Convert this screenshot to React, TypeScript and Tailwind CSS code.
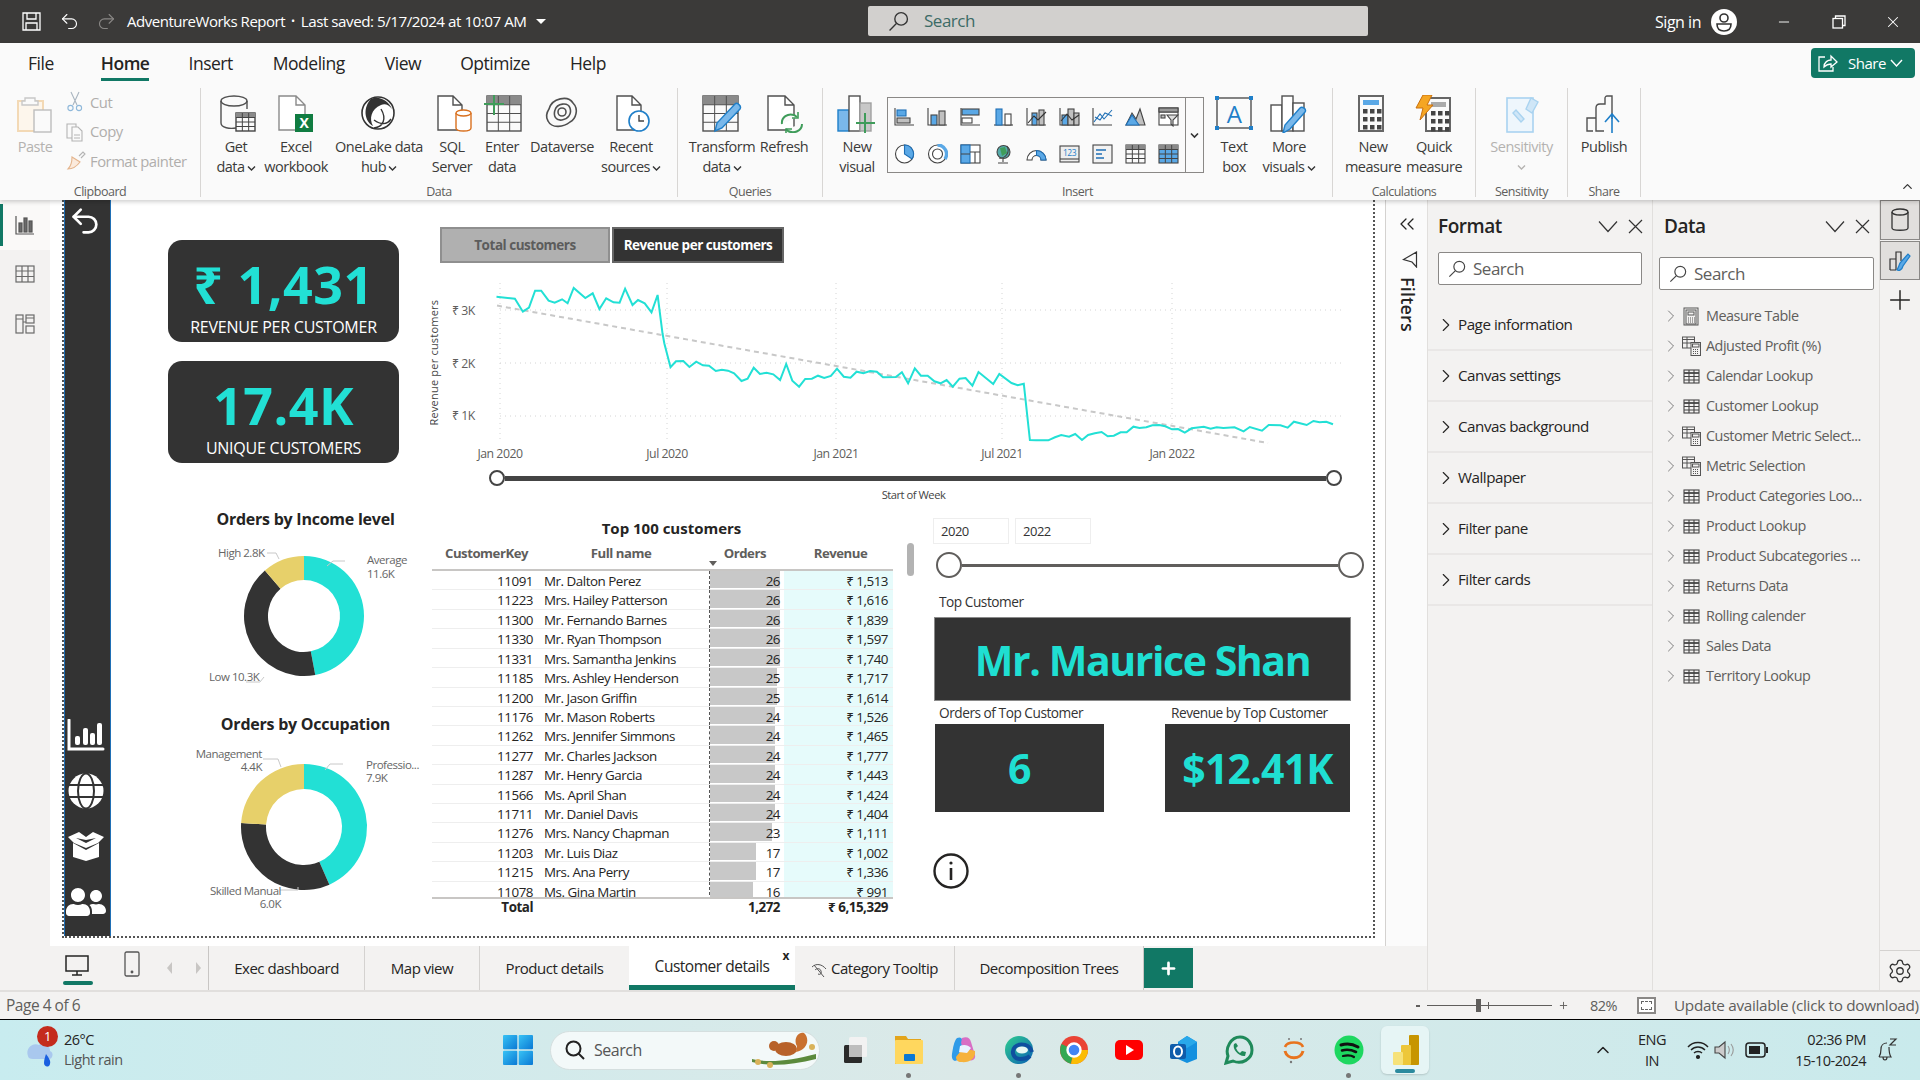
import React from "react";
import { Undo2, Redo2, ChevronRight, X, Plus, Minus, ChevronUp, ChevronsLeft, Settings } from "lucide-react";
import { FaUserFriends } from "react-icons/fa";

const TEAL = "#22e0d5";
const S = "#505050";

const Mag = ({ size = 20, color = "#444" }: { size?: number; color?: string }) => (
  <svg width={size} height={size} viewBox="0 0 20 20" fill="none" stroke={color} strokeWidth="1.3">
    <circle cx="12.5" cy="7.5" r="6" />
    <path d="M8 12 L1.5 18.5" />
  </svg>
);

const Ic = ({ w = 40, h = 38, children }: { w?: number; h?: number; children: React.ReactNode }) => (
  <svg width={w} height={h} viewBox={`0 0 ${w} ${h}`} fill="none" stroke={S} strokeWidth="1.4" className="block shrink-0">
    {children}
  </svg>
);

const Grid = ({ x, y, w, h, head = true, cols = 3, rows = 3, fill = "none" }: { x: number; y: number; w: number; h: number; head?: boolean; cols?: number; rows?: number; fill?: string }) => {
  const ls = [];
  for (let i = 1; i < cols; i++) ls.push(<path key={"c" + i} d={`M${x + (w * i) / cols} ${y} V${y + h}`} strokeWidth="1" />);
  for (let i = 1; i < rows; i++) ls.push(<path key={"r" + i} d={`M${x} ${y + (h * i) / rows} H${x + w}`} strokeWidth="1" />);
  return (
    <g>
      <rect x={x} y={y} width={w} height={h} fill={fill} />
      {head && <rect x={x} y={y} width={w} height={h / rows} fill="#8a8a8a" stroke="none" />}
      {ls}
    </g>
  );
};

const Doc = ({ x = 0, y = 0, w = 24, h = 34 }: { x?: number; y?: number; w?: number; h?: number }) => (
  <path d={`M${x + w - 9} ${y} H${x} V${y + h} H${x + w} V${y + 9} Z M${x + w - 9} ${y} V${y + 9} H${x + w}`} fill="#fff" />
);

const IGet = () => (
  <Ic>
    <path d="M5 6 V28 C5 33 14 34 20 33 M31 6 V14" />
    <ellipse cx="18" cy="6" rx="13" ry="5" />
    <g stroke="#444"><Grid x={20} y={18} w={19} h={18} cols={3} rows={4} fill="#fafafa" /></g>
  </Ic>
);
const IExcel = () => (
  <Ic>
    <g stroke="#8a8a8a"><Doc x={3} y={1} w={26} h={34} /></g>
    <rect x="19" y="19" width="18" height="18" fill="#107c41" stroke="none" />
    <text x="28" y="33" fontSize="14" fontWeight="700" fill="#fff" stroke="none" textAnchor="middle">X</text>
  </Ic>
);
const IOneLake = () => (
  <Ic>
    <circle cx="19" cy="18" r="16" fill="#fff" stroke="#333" strokeWidth="1.6" />
    <path d="M12 4 C4 12 5 26 14 31 C10 24 12 14 22 10 C26 8 30 10 33 14 C30 6 20 0 12 4Z" fill="#333" stroke="none" />
    <path d="M15 33 C24 32 28 24 22 14 M32 24 C28 30 22 30 15 25" stroke="#333" />
  </Ic>
);
const ISql = () => (
  <Ic>
    <Doc x={6} y={1} w={24} h={34} />
    <path d="M24 18 V33 C24 37 39 37 39 33 V18" fill="#fff" stroke="#d9701e" />
    <ellipse cx="31.5" cy="18" rx="7.5" ry="3" fill="#fff" stroke="#d9701e" />
  </Ic>
);
const IEnter = () => (
  <Ic>
    <g transform="translate(1,-1)"><Grid x={4} y={2} w={34} h={35} cols={3} rows={4} /></g>
    <path d="M12 0 V20 M2 9 H22" stroke="#3f9c5a" strokeWidth="2" />
  </Ic>
);
const IDataverse = () => (
  <Ic>
    <path d="M7 14 C10 3 26 0 31 8 C37 14 34 24 28 27 C22 32 10 34 6 26 C3 21 5 17 7 14Z" strokeWidth="1.6" />
    <path d="M13 15 C15 8 26 7 28 13 C30 19 26 24 20 25 C14 26 11 21 13 15Z" strokeWidth="1.6" />
    <circle cx="20" cy="17" r="4" strokeWidth="1.6" />
  </Ic>
);
const IRecent = () => (
  <Ic>
    <Doc x={6} y={1} w={24} h={34} />
    <circle cx="28" cy="26" r="10" fill="#fff" stroke="#1f7fc9" strokeWidth="1.6" />
    <path d="M28 20 V26 H33" stroke="#444" />
  </Ic>
);
const ITransform = () => (
  <Ic>
    <Grid x={1} y={1} w={35} h={35} cols={3} rows={4} />
    <path d="M13 36 L15 28 L33 9 C35 7 40 11 38 14 L20 33 Z" fill="#7ab8ea" stroke="#1f7fc9" />
  </Ic>
);
const IRefresh = () => (
  <Ic>
    <Doc x={4} y={1} w={26} h={34} />
    <path d="M18 29 C17 22 24 18 30 20 L33 22 M38 29 C38 36 30 39 24 36 L22 34" stroke="#3f9c5a" strokeWidth="2" fill="#fafafa" />
    <path d="M34 17 V23 H28 M22 40 V34 H28" stroke="#3f9c5a" strokeWidth="1.6" />
  </Ic>
);
const INewVis = () => (
  <Ic>
    <rect x="1" y="15" width="11" height="21" fill="#7ab8ea" stroke="#1f7fc9" />
    <rect x="12" y="1" width="11" height="35" fill="#fff" />
    <rect x="23" y="8" width="11" height="28" fill="#c8c8c8" stroke="#a0a0a0" />
    <path d="M28 18 V38 M19 28 H38" stroke="#3f9c5a" strokeWidth="2" />
  </Ic>
);
const ITextBox = () => (
  <Ic>
    <rect x="3" y="3" width="34" height="30" />
    <text x="20" y="28" fontSize="24" fill="#1f7fc9" stroke="none" textAnchor="middle">A</text>
    {[[3, 3], [37, 3], [3, 33], [37, 33]].map(([x, y], i) => (
      <rect key={i} x={x - 2} y={y - 2} width="4" height="4" fill="#1f7fc9" stroke="none" />
    ))}
  </Ic>
);
const IMore = () => (
  <Ic>
    <rect x="2" y="10" width="11" height="26" fill="#fff" />
    <rect x="13" y="1" width="11" height="35" fill="#fff" />
    <rect x="24" y="8" width="11" height="28" fill="#fff" />
    <path d="M14 38 L16 30 L31 13 C33 11 38 14 36 17 L21 34 Z" fill="#7ab8ea" stroke="#1f7fc9" />
  </Ic>
);
const Keys = ({ x, y }: { x: number; y: number }) => (
  <g fill="#444" stroke="none">
    {[0, 8, 16].map((dy) => [0, 7, 14].map((dx) => <rect key={`${dx}-${dy}`} x={x + dx} y={y + dy} width="4.5" height="4.5" />))}
  </g>
);
const IMeasure = () => (
  <Ic>
    <rect x="6" y="1" width="24" height="35" strokeWidth="2" stroke="#666" />
    <rect x="10" y="5" width="16" height="5" fill="#5aa8e6" stroke="none" />
    <Keys x={10} y={14} />
  </Ic>
);
const IQuick = () => (
  <Ic>
    <rect x="12" y="3" width="24" height="33" strokeWidth="2" stroke="#666" />
    <rect x="17" y="7" width="15" height="5" fill="#aaa" stroke="none" />
    <Keys x={17} y={16} />
    <path d="M9 0 H18 L13 10 H19 L6 25 L9 13 H2 Z" fill="#f5a623" stroke="#c96f0e" strokeWidth="1" />
  </Ic>
);
const ISens = () => (
  <Ic>
    <rect x="5" y="3" width="26" height="34" stroke="#a9d3f0" strokeWidth="1.6" fill="#eef6fc" />
    <path d="M11 18 L19 27 L22 24 L14 15Z M24 14 L29 3 L36 7 L30 18Z" stroke="#a9d3f0" fill="#cfe6f7" />
  </Ic>
);
const IPublish = () => (
  <Ic>
    <path d="M9 36 H3 V23 H12 V36 H20 M12 23 V13 C12 10 14 9 16 9 H21 V3 C21 2 22 1 23 1 H28 V24" />
    <path d="M28 38 V20 M21 27 L28 19 L35 27" stroke="#1f7fc9" strokeWidth="1.6" />
  </Ic>
);

const gal = (n: number) => {
  const A = <path d="M1 1 V18 H20" stroke="#444" />;
  const B = "#5aa8e6";
  const G = "#c0c0c0";
  switch (n) {
    case 0: return <>{A}<rect x="3" y="3" width="9" height="6" fill={B} stroke="#1f6fb5" /><rect x="3" y="11" width="13" height="5" fill={G} /></>;
    case 1: return <>{A}<rect x="4" y="8" width="6" height="10" fill={B} /><rect x="12" y="4" width="6" height="14" fill={G} /></>;
    case 2: return <>{A}<rect x="2" y="2" width="17" height="6" fill={B} /><rect x="2" y="11" width="10" height="5" fill="#fff" /></>;
    case 3: return <><path d="M1 18 H20" stroke="#444" /><rect x="3" y="2" width="6" height="16" fill={B} stroke="#1f6fb5" /><rect x="12" y="7" width="6" height="11" fill="#fff" /></>;
    case 4: return <>{A}<rect x="6" y="6" width="5" height="12" fill={B} /><rect x="13" y="3" width="5" height="15" fill={G} /><path d="M2 16 L8 9 L12 13 L20 5" stroke="#333" /></>;
    case 5: return <>{A}<rect x="3" y="8" width="6" height="10" fill={B} /><rect x="9" y="2" width="6" height="16" fill={G} /><rect x="15" y="6" width="5" height="12" fill={G} /><path d="M2 14 L8 7 L13 13 L20 8" stroke="#333" /></>;
    case 6: return <>{A}<path d="M2 15 L8 7 L12 12 L20 3 M3 10 L8 13 L13 6 L20 9" stroke="#1f6fb5" /></>;
    case 7: return <><path d="M1 18 L7 6 L11 12 L15 2 L20 18 Z" fill={G} /><path d="M1 18 L7 8 L14 18Z" fill={B} stroke="#1f6fb5" /></>;
    case 8: return <><rect x="1" y="1" width="19" height="17" fill="#fff" /><path d="M1 5 H20" /><rect x="1" y="1" width="19" height="4" fill="#999" /><path d="M9 8 H20 L15 13 V19 L13 17 V13Z" fill="#ddd" /><rect x="3" y="8" width="4" height="3" fill={G} /></>;
    case 9: return <><circle cx="10.5" cy="10" r="9" fill="#fff" /><path d="M10.5 1 A9 9 0 0 1 18 15 L10.5 10Z" fill={B} stroke="#1f6fb5" /></>;
    case 10: return <><circle cx="10.5" cy="10" r="9" fill="#fff" /><circle cx="10.5" cy="10" r="5" /><path d="M10.5 1 A9 9 0 0 1 18 15" stroke={B} strokeWidth="3.4" /></>;
    case 11: return <><rect x="1" y="1" width="19" height="18" fill="#fff" /><rect x="1" y="1" width="9" height="18" fill={B} stroke="#1f6fb5" /><path d="M1 10 H10 M10 8 H20 M15 8 V19" /></>;
    case 12: return <><circle cx="10.5" cy="8" r="6.5" fill="#5aa" /><path d="M7 4 L12 3 L14 9 L9 12Z" fill="#3f9c5a" stroke="none" /><path d="M14 2 A8 8 0 0 1 6 14 M10 15 V18 M5 19 H15" /></>;
    case 13: return <><path d="M1 16 A9.5 9.5 0 0 1 20 16 H15 A4.5 4.5 0 0 0 6 16Z" fill="#fff" /><path d="M10.5 6.5 A9.5 9.5 0 0 1 20 16 H15 A4.5 4.5 0 0 0 10.5 11.5Z" fill={B} stroke="#1f6fb5" /></>;
    case 14: return <><rect x="1" y="2" width="19" height="16" fill="#eee" /><path d="M1 15 H20" /><text x="10.5" y="12" fontSize="8.5" fill="#1f7fc9" stroke="none" textAnchor="middle">123</text></>;
    case 15: return <><rect x="1" y="1" width="19" height="18" fill="#f2f2f2" /><path d="M4 6 H14 M4 10 H10 M4 14 H12" stroke="#1f6fb5" strokeWidth="1.6" /></>;
    case 16: return <><Grid x={1} y={1} w={19} h={18} cols={3} rows={4} /></>;
    default: return <><Grid x={1} y={1} w={19} h={18} cols={3} rows={4} fill={B} /></>;
  }
};

const Chev = () => (
  <svg width="9" height="7" viewBox="0 0 9 7" fill="none" stroke="#333" strokeWidth="1.4" className="inline-block ml-[2px]">
    <path d="M1 1.5 L4.5 5 L8 1.5" />
  </svg>
);

const PaneHead = ({ t, ml }: { t: string; ml: string }) => (
  <div className={`h-[52px] flex items-center ${ml} pr-[9px] text-[19px] font-semibold text-[#252423] pt-[1px]`}>
    <span>{t}</span>
    <svg width="20" height="13" viewBox="0 0 20 13" fill="none" stroke="#333" strokeWidth="1.2" className="ml-auto"><path d="M1 1.5 L10 11.5 L19 1.5" /></svg>
    <svg width="15" height="15" viewBox="0 0 15 15" fill="none" stroke="#333" strokeWidth="1.2" className="ml-[10px]"><path d="M1 1 L14 14 M14 1 L1 14" /></svg>
  </div>
);

const RB = ({ w, icon, l1, l2, chev }: { w: string; icon: React.ReactNode; l1: string; l2?: string; chev?: boolean }) => (
  <div className={`${w} flex flex-col items-center pt-[7px] text-[14.5px] leading-[20px] text-[#3b3a39] whitespace-nowrap`}>
    <div className="h-[38px] flex justify-center">{icon}</div>
    <div className="mt-[4px]">{l1}</div>
    {l2 && <div>{l2}{chev && <Chev />}</div>}
  </div>
);

const Group = ({ w, label, children, pl }: { w: string; label: string; children: React.ReactNode; pl?: string }) => (
  <div className={`${w} shrink-0 h-[109px] flex flex-col border-r border-[#d8d6d4]`}>
    <div className={`flex-1 flex min-h-0 ${pl || ""}`}>{children}</div>
    <div className="text-[12.5px] leading-[16px] text-center text-[#605e5c] -mb-[3px]">{label}</div>
  </div>
);

const TitleBar = () => (
  <div className="h-[43px] shrink-0 bg-[#3b3a39] flex items-center text-white">
    <svg width="19" height="19" viewBox="0 0 19 19" fill="none" stroke="#fff" strokeWidth="1.3" className="ml-[22px]">
      <path d="M1 1 H18 V18 H1Z M5 1 V7 H14 V1 M4 18 V11 H15 V18" />
    </svg>
    <Undo2 size={21} strokeWidth={1.3} color="#fff" className="ml-[18px]" />
    <Redo2 size={21} strokeWidth={1.3} color="#8a8886" className="ml-[16px]" />
    <span className="ml-[10px] text-[15px]">AdventureWorks Report</span>
    <span className="ml-[6px] text-[11px]">•</span>
    <span className="ml-[6px] text-[15.2px]">Last saved: 5/17/2024 at 10:07 AM</span>
    <div className="ml-[9px] w-0 h-0 border-x-[5px] border-x-transparent border-t-[5px] border-t-white" />
    <div className="absolute left-[868px] top-[6px] w-[500px] h-[30px] rounded-[2px] bg-[#d2d0ce] flex items-center pl-[20px]">
      <Mag size={21} color="#333" />
      <span className="ml-[15px] text-[17px] text-[#3c6b66]">Search</span>
    </div>
    <span className="ml-auto text-[16px]">Sign in</span>
    <svg width="26" height="26" viewBox="0 0 26 26" className="ml-[10px]">
      <circle cx="13" cy="13" r="13" fill="#fff" />
      <circle cx="13" cy="9" r="4" fill="none" stroke="#333" strokeWidth="1.6" />
      <path d="M6 15 H20 C20 20 17 22 13 22 C9 22 6 20 6 15Z" fill="none" stroke="#333" strokeWidth="1.6" />
    </svg>
    <Minus size={16} strokeWidth={1.4} className="ml-[39px]" />
    <svg width="14" height="14" viewBox="0 0 14 14" fill="none" stroke="#fff" strokeWidth="1.3" className="ml-[40px]">
      <rect x="1" y="3.5" width="9.5" height="9.5" />
      <path d="M3.5 3.5 V1 H13 V10.5 H10.5" />
    </svg>
    <X size={18} strokeWidth={1.4} className="ml-[38px] mr-[18px]" />
  </div>
);

const Ribbon = () => (
  <div className="h-[157px] shrink-0 bg-[#fafafa] shadow-[0_2px_4px_rgba(0,0,0,0.18)] z-10 relative">
    <div className="h-[45px] flex items-start text-[17.5px] text-[#252423] pl-[28px]">
      <div className="pt-[7px]">File</div>
      <div className="ml-[47px] pt-[7px] flex flex-col items-stretch">
        <span className="font-semibold leading-[26px]">Home</span>
        <span className="h-[3px] bg-[#117865] mt-[2px]" />
      </div>
      <div className="ml-[39px] pt-[7px]">Insert</div>
      <div className="ml-[40px] pt-[7px]">Modeling</div>
      <div className="ml-[40px] pt-[7px]">View</div>
      <div className="ml-[39px] pt-[7px]">Optimize</div>
      <div className="ml-[40px] pt-[7px]">Help</div>
      <div className="ml-auto mr-[5px] mt-[5px] w-[104px] h-[30px] bg-[#117865] rounded-[4px] flex items-center text-white text-[15px] pl-[7px]">
        <svg width="20" height="20" viewBox="0 0 20 20" fill="none" stroke="#fff" strokeWidth="1.3">
          <path d="M7 4 H1 V18 H15 V14 M6 14 C6 9 10 7 13 7 V3 L19 9 L13 14 V11 C10 11 8 12 6 14Z" />
        </svg>
        <span className="ml-[10px]">Share</span>
        <svg width="13" height="8" viewBox="0 0 13 8" fill="none" stroke="#fff" strokeWidth="1.4" className="ml-[4px]"><path d="M1 1 L6.5 7 L12 1" /></svg>
      </div>
    </div>
    <div className="flex h-[112px]">
      <Group w="w-[201px]" label="Clipboard">
        <div className="w-[50px] ml-[10px] flex flex-col items-center pt-[7px] text-[14.5px] leading-[20px] text-[#b4b2b0]">
          <div className="h-[38px]">
            <Ic>
              <rect x="3" y="6" width="25" height="30" stroke="#f3d9b5" fill="#fdf6ec" strokeWidth="2" />
              <path d="M10 6 V3 H20 V6 H23 V10 H7 V6Z" stroke="#c8c8c8" fill="#fafafa" />
              <rect x="19" y="15" width="17" height="22" stroke="#bdbdbd" fill="#fafafa" />
            </Ic>
          </div>
          <div className="mt-[4px]">Paste</div>
        </div>
        <div className="ml-[5px] -mt-[1px] flex flex-col text-[14.8px] text-[#b0aeac]">
          {[
            ["Cut", <g key="c" stroke="#a9b5c0" strokeWidth="1.1"><path d="M6 1 L12 14 M14 1 L8 14" /><circle cx="5.5" cy="17" r="2.6" stroke="#8fb8da" /><circle cx="14" cy="17" r="2.6" stroke="#8fb8da" /></g>],
            ["Copy", <g key="d" stroke="#b4b4b4" strokeWidth="1.1"><path d="M2 3 H11 V17 H2Z" /><path d="M7 6 H13 L17 10 V20 H7Z" fill="#fafafa" /><path d="M9 14 H15 M9 17 H15" /></g>],
            ["Format painter", <g key="e" strokeWidth="1.1"><path d="M14 6 L18 2 L20 4 L16 8" stroke="#b4b4b4" /><path d="M7 7 L15 12 C12 16 8 19 3 19 C6 16 7 12 7 7Z" stroke="#e4b48c" fill="#fbeadc" /></g>],
          ].map(([t, g], i) => (
            <div key={i} className="h-[29.5px] flex items-center">
              <svg width="21" height="21" viewBox="0 0 21 21" fill="none" className="shrink-0">{g}</svg>
              <span className="ml-[4px] whitespace-nowrap">{t as string}</span>
            </div>
          ))}
        </div>
      </Group>
      <Group w="w-[477px]" label="Data" pl="pl-[5px]">
        <RB w="w-[60px]" icon={<IGet />} l1="Get" l2="data" chev />
        <RB w="w-[60px]" icon={<IExcel />} l1="Excel" l2="workbook" />
        <RB w="w-[106px]" icon={<IOneLake />} l1="OneLake data" l2="hub" chev />
        <RB w="w-[40px]" icon={<ISql />} l1="SQL" l2="Server" />
        <RB w="w-[60px]" icon={<IEnter />} l1="Enter" l2="data" />
        <RB w="w-[60px]" icon={<IDataverse />} l1="Dataverse" />
        <RB w="w-[78px]" icon={<IRecent />} l1="Recent" l2="sources" chev />
      </Group>
      <Group w="w-[145px]" label="Queries" pl="pl-[6px]">
        <RB w="w-[76px]" icon={<ITransform />} l1="Transform" l2="data" chev />
        <RB w="w-[48px]" icon={<IRefresh />} l1="Refresh" />
      </Group>
      <Group w="w-[510px]" label="Insert" pl="pl-[4px]">
        <RB w="w-[60px]" icon={<INewVis />} l1="New" l2="visual" />
        <div className="w-[317px] h-[76px] mt-[9px] border border-[#8a8886] flex">
          <div className="w-[297px] grid grid-cols-9">
            {Array.from({ length: 18 }, (_, i) => (
              <div key={i} className="flex items-center justify-center">
                <svg width="21" height="20" viewBox="0 0 21 20" fill="none" stroke="#444" strokeWidth="1.1">{gal(i)}</svg>
              </div>
            ))}
          </div>
          <div className="flex-1 border-l border-[#8a8886] flex items-center justify-center">
            <svg width="9" height="7" viewBox="0 0 9 7" fill="none" stroke="#333" strokeWidth="1.6"><path d="M1 1.5 L4.5 5 L8 1.5" /></svg>
          </div>
        </div>
        <RB w="w-[60px]" icon={<ITextBox />} l1="Text" l2="box" />
        <RB w="w-[50px]" icon={<IMore />} l1="More" l2="visuals" chev />
      </Group>
      <Group w="w-[143px]" label="Calculations" pl="pl-[7px]">
        <RB w="w-[66px]" icon={<IMeasure />} l1="New" l2="measure" />
        <RB w="w-[56px]" icon={<IQuick />} l1="Quick" l2="measure" />
      </Group>
      <Group w="w-[92px]" label="Sensitivity">
        <div className="w-full flex flex-col items-center pt-[7px] text-[14.5px] leading-[20px] text-[#b4b2b0]">
          <div className="h-[38px]"><ISens /></div>
          <div className="mt-[4px]">Sensitivity</div>
          <div className="h-[20px] flex items-center"><svg width="9" height="7" viewBox="0 0 9 7" fill="none" stroke="#b4b2b0" strokeWidth="1.4"><path d="M1 1.5 L4.5 5 L8 1.5" /></svg></div>
        </div>
      </Group>
      <Group w="w-[73px]" label="Share">
        <RB w="w-full" icon={<IPublish />} l1="Publish" />
      </Group>
      <div className="ml-auto self-end pb-[6px] pr-[5px]"><ChevronUp size={15} strokeWidth={2} color="#333" /></div>
    </div>
  </div>
);

const Rail = () => (
  <div className="w-[50px] shrink-0 bg-[#f3f2f1] flex flex-col">
    <div className="h-[50px] bg-[#faf9f8] flex items-center relative">
      <div className="absolute left-0 top-[4px] w-[3px] h-[42px] bg-[#117865]" />
      <svg width="20" height="20" viewBox="0 0 20 20" fill="none" stroke="#555" strokeWidth="1.2" className="ml-[15px]">
        <path d="M1 1 V19 H19" />
        <rect x="4" y="8" width="3" height="9" fill="#6a6a6a" />
        <rect x="9" y="3" width="3" height="14" fill="#6a6a6a" />
        <rect x="14" y="6" width="3" height="11" fill="#6a6a6a" />
      </svg>
    </div>
    <svg width="20" height="20" viewBox="0 0 20 20" fill="none" stroke="#6a6a6a" strokeWidth="1.2" className="ml-[15px] mt-[14px]">
      <rect x="1" y="2" width="18" height="16" /><path d="M1 7 H19 M1 12.5 H19 M7 2 V18 M13 2 V18" />
    </svg>
    <svg width="20" height="20" viewBox="0 0 20 20" fill="none" stroke="#6a6a6a" strokeWidth="1.2" className="ml-[15px] mt-[30px]">
      <rect x="1" y="1" width="7" height="18" /><rect x="11" y="1" width="8" height="8" /><rect x="11" y="12" width="8" height="7" /><path d="M1 5 H8 M11 4 H19 M8 8 H11" />
    </svg>
  </div>
);

const Card = ({ value, label }: { value: string; label: string }) => (
  <div className="w-[231px] h-[102px] rounded-[14px] bg-[#333] flex flex-col items-center">
    <div className="text-[52px] leading-[52px] font-bold tracking-[0.01em] mt-[18px]" style={{ color: TEAL }}>{value}</div>
    <div className="text-[16px] leading-[20px] text-white mt-[7px] tracking-[-0.015em]">{label}</div>
  </div>
);

const polar = (cx: number, cy: number, r: number, f: number) => {
  const a = f * 2 * Math.PI - Math.PI / 2;
  return [cx + r * Math.cos(a), cy + r * Math.sin(a)];
};
const seg = (cx: number, cy: number, r0: number, r1: number, a: number, b: number) => {
  const [x1, y1] = polar(cx, cy, r1, a);
  const [x2, y2] = polar(cx, cy, r1, b);
  const [x3, y3] = polar(cx, cy, r0, b);
  const [x4, y4] = polar(cx, cy, r0, a);
  const l = b - a > 0.5 ? 1 : 0;
  return `M${x1} ${y1} A${r1} ${r1} 0 ${l} 1 ${x2} ${y2} L${x3} ${y3} A${r0} ${r0} 0 ${l} 0 ${x4} ${y4}Z`;
};

const Donut1 = () => {
  const cx = 124, cy = 87;
  return (
    <svg width="250" height="185" viewBox="0 0 250 185" className="block ml-[12px]" fontSize="11.5" fill="#666">
      <path d={seg(cx, cy, 36, 60, 0, 0.47)} fill={TEAL} />
      <path d={seg(cx, cy, 36, 60, 0.47, 0.887)} fill="#333" />
      <path d={seg(cx, cy, 36, 60, 0.887, 1)} fill="#e7d06a" />
      <path d="M87 24 H96 L99 30 M147 37 L153 32 H165 M84 148 L80 153 H66" fill="none" stroke="#c8c8c8" />
      <text x="38" y="28">High 2.8K</text>
      <text x="187" y="35">Average</text>
      <text x="187" y="49">11.6K</text>
      <text x="29" y="152">Low 10.3K</text>
    </svg>
  );
};
const Donut2 = () => {
  const cx = 124, cy = 93;
  return (
    <svg width="250" height="180" viewBox="0 0 250 180" className="block ml-[12px]" fontSize="11.5" fill="#666">
      <path d={seg(cx, cy, 38, 63, 0, 0.434)} fill={TEAL} />
      <path d={seg(cx, cy, 38, 63, 0.434, 0.76)} fill="#333" />
      <path d={seg(cx, cy, 38, 63, 0.76, 1)} fill="#e7d06a" />
      <path d="M83 25 H98 L101 33 M145 36 L150 30 H163 M100 156 H118 V153" fill="none" stroke="#c8c8c8" />
      <text x="82" y="24" textAnchor="end">Management</text>
      <text x="82" y="37" textAnchor="end">4.4K</text>
      <text x="186" y="35">Professio...</text>
      <text x="186" y="48">7.9K</text>
      <text x="101" y="161" textAnchor="end">Skilled Manual</text>
      <text x="101" y="174" textAnchor="end">6.0K</text>
    </svg>
  );
};

const pts: [number, number][] = [[125,230],[155,236],[168,275],[178,263],[188,212],[198,212],[210,242],[220,248],[232,238],[241,250],[251,204],[270,234],[282,220],[293,267],[304,235],[316,247],[326,248],[335,206],[347,255],[356,240],[367,250],[378,277],[388,225],[396,340],[399,370],[409,442],[418,424],[430,423],[440,441],[451,425],[462,436],[472,437],[483,453],[493,449],[503,452],[513,460],[525,483],[535,476],[545,443],[555,462],[566,458],[577,463],[588,480],[598,432],[608,482],[619,500],[629,477],[640,476],[650,467],[660,474],[671,468],[681,446],[692,470],[703,473],[713,455],[724,460],[735,453],[746,455],[756,472],[777,471],[787,457],[797,490],[808,445],[818,467],[829,467],[840,484],[850,490],[860,480],[870,500],[881,476],[891,474],[902,497],[912,456],[936,492],[946,462],[966,489],[976,496],[986,491],[996,660],[1006,661],[1026,661],[1037,652],[1047,645],[1060,650],[1070,642],[1081,660],[1091,645],[1102,640],[1113,636],[1123,649],[1133,647],[1144,637],[1154,637],[1165,620],[1175,624],[1186,622],[1196,616],[1207,615],[1217,619],[1228,628],[1238,627],[1249,638],[1260,625],[1280,620],[1291,626],[1301,622],[1312,624],[1330,622],[1345,634],[1355,621],[1375,632],[1386,615],[1405,616],[1417,623],[1427,605],[1448,615],[1459,603],[1469,607],[1480,605],[1491,613]];
const line = pts.map(([x, y]) => `${(420 + x / 1.633).toFixed(1)},${(220 + y / 3).toFixed(1)}`).join(" ");

const LineChart = () => (
  <svg width="940" height="202" viewBox="430 263 940 202" className="block" fontSize="12.3" fill="#605e5c">
    <g stroke="#d4d4d4" strokeDasharray="1 4" strokeWidth="1">
      {[310, 363, 416].map((y) => <path key={y} d={`M500 ${y} H1342`} />)}
      {[500, 667, 836, 1002, 1172].map((x) => <path key={x} d={`M${x} 283 V443`} />)}
    </g>
    <path d="M497 305.6 L1268 443" stroke="#c8c8c8" strokeWidth="2" strokeDasharray="5 4" fill="none" />
    <polyline points={line} fill="none" stroke={TEAL} strokeWidth="2" />
    {[["₹ 3K", 315], ["₹ 2K", 368], ["₹ 1K", 420]].map(([t, y]) => <text key={t} x="452" y={y} >{t}</text>)}
    {[["Jan 2020", 500], ["Jul 2020", 667], ["Jan 2021", 836], ["Jul 2021", 1002], ["Jan 2022", 1172]].map(([t, x]) => (
      <text key={t} x={x} y="458" textAnchor="middle">{t}</text>
    ))}
    <text transform="translate(438 363) rotate(-90)" fontSize="11" textAnchor="middle" textLength="125" fill="#444">Revenue per customers</text>
  </svg>
);

const rows: [number, string, number, string][] = [
  [11091, "Mr. Dalton Perez", 26, "₹ 1,513"],
  [11223, "Mrs. Hailey Patterson", 26, "₹ 1,616"],
  [11300, "Mr. Fernando Barnes", 26, "₹ 1,839"],
  [11330, "Mr. Ryan Thompson", 26, "₹ 1,597"],
  [11331, "Mrs. Samantha Jenkins", 26, "₹ 1,740"],
  [11185, "Mrs. Ashley Henderson", 25, "₹ 1,717"],
  [11200, "Mr. Jason Griffin", 25, "₹ 1,614"],
  [11176, "Mr. Mason Roberts", 24, "₹ 1,526"],
  [11262, "Mrs. Jennifer Simmons", 24, "₹ 1,465"],
  [11277, "Mr. Charles Jackson", 24, "₹ 1,777"],
  [11287, "Mr. Henry Garcia", 24, "₹ 1,443"],
  [11566, "Ms. April Shan", 24, "₹ 1,424"],
  [11711, "Mr. Daniel Davis", 24, "₹ 1,404"],
  [11276, "Mrs. Nancy Chapman", 23, "₹ 1,111"],
  [11203, "Mr. Luis Diaz", 17, "₹ 1,002"],
  [11215, "Mrs. Ana Perry", 17, "₹ 1,336"],
  [11078, "Ms. Gina Martin", 16, "₹ 991"],
];

const Table = () => (
  <div className="w-[461px] shrink-0 ml-[2px]">
    <div className="mt-[15px] h-[21px] text-[15px] leading-[20px] font-bold text-center text-[#252423] pl-[18px] tracking-[0]">Top 100 customers</div>
    <div className="h-[32px] flex border-b-2 border-[#c8c6c4] text-[13.2px] font-bold text-[#605e5c] relative pt-[3px]">
      <div className="w-[101px] text-right leading-[20px] pt-[1px] pr-[5px]">CustomerKey</div>
      <div className="w-[176px] text-center leading-[20px] pt-[1px]">Full name</div>
      <div className="w-[71px] text-right leading-[20px] pt-[1px] pr-[14px]">Orders</div>
      <div className="flex-1 text-center leading-[20px] pt-[1px] pl-[8px]">Revenue</div>
      <div className="absolute left-[277px] bottom-[3px] w-0 h-0 border-x-[4px] border-x-transparent border-t-[5px] border-t-[#605e5c]" />
    </div>
    <div className="h-[326px] overflow-hidden">
      {rows.map((r) => (
        <div key={r[0]} className="h-[19.43px] flex text-[13.4px] leading-[20px] text-[#252423] border-b border-[#eeeeee]">
          <div className="w-[101px] text-right tabular-nums">{r[0]}</div>
          <div className="w-[176px] pl-[11px] whitespace-nowrap">{r[1]}</div>
          <div className="w-[71px] relative text-right border-l border-dashed border-[#555]">
            <div className="absolute left-0 top-0 bottom-[1px] bg-[#c8c8c8]" style={{ width: `${(r[2] / 26) * 70}px` }} />
            <span className="relative">{r[2]}</span>
          </div>
          <div className="w-[4px]" />
          <div className="flex-1 bg-[#e6fbfb] text-right pr-[5px]">{r[3]}</div>
        </div>
      ))}
    </div>
    <div className="h-[20px] flex text-[13.4px] leading-[16px] font-bold text-[#252423] border-t-2 border-[#c8c6c4]">
      <div className="w-[101px] text-right">Total</div>
      <div className="w-[176px]" />
      <div className="w-[71px] text-right">1,272</div>
      <div className="w-[4px]" />
      <div className="flex-1 text-right pr-[5px]">₹ 6,15,329</div>
    </div>
  </div>
);

const RightPanel = () => (
  <div className="w-[431px] shrink-0">
    <div className="mt-[15px] flex gap-[6px]">
      {["2020", "2022"].map((t) => (
        <div key={t} className="w-[76px] h-[26px] border border-[#eeeeee] text-[13px] leading-[24px] pl-[7px] text-[#333]">{t}</div>
      ))}
    </div>
    <div className="mt-[8px] ml-[3px] w-[428px] flex items-center">
      <div className="w-[26px] h-[26px] rounded-full border-2 border-[#605e5c] bg-white" />
      <div className="flex-1 h-[3px] bg-[#605e5c]" />
      <div className="w-[26px] h-[26px] rounded-full border-2 border-[#605e5c] bg-white" />
    </div>
    <div className="mt-[15px] pl-[6px] text-[13.7px] leading-[18px] text-[#333]">Top Customer</div>
    <div className="mt-[6px] ml-[1px] w-[417px] h-[84px] bg-[#333] border border-[#8a8a8a] flex items-center justify-center text-[41px] font-bold tracking-[-0.035em] pt-[3px]" style={{ color: "#1fdfd2" }}>
      Mr. Maurice Shan
    </div>
    <div className="mt-[3px] h-[18px] flex text-[13.7px] leading-[18px] text-[#333]">
      <div className="w-[238px] pl-[6px]">Orders of Top Customer</div>
      <div>Revenue by Top Customer</div>
    </div>
    <div className="mt-[2px] ml-[2px] flex">
      <div className="w-[169px] h-[88px] bg-[#333] flex items-center justify-center text-[41px] font-bold pt-[2px]" style={{ color: "#1fdfd2" }}>6</div>
      <div className="ml-[61px] w-[185px] h-[88px] bg-[#333] flex items-center justify-center text-[41px] font-bold tracking-[-0.02em] pt-[2px]" style={{ color: "#1fdfd2" }}>$12.41K</div>
    </div>
    <svg width="36" height="36" viewBox="0 0 36 36" fill="none" stroke="#252423" strokeWidth="2.4" className="mt-[41px]">
      <circle cx="18" cy="18" r="16.5" />
      <path d="M18 15 V27" strokeWidth="2.6" />
      <circle cx="18" cy="10" r="1.6" fill="#252423" stroke="none" />
    </svg>
  </div>
);

const Page = () => (
  <div className="bg-white flex-1 min-w-0 border-r border-[#d4d2d0]">
    <div className="ml-[12px] w-[1313px] h-[738px] border-x-2 border-b-2 border-dotted border-[#555] flex">
      <div className="w-[47px] h-full bg-[#333] border-x border-[#1f6fb5] flex flex-col items-center">
        <Undo2 size={34} strokeWidth={1.9} color="#fff" className="mt-[4px] -ml-[5px]" />
        <svg width="38" height="32" viewBox="0 0 38 32" fill="none" className="mt-auto -ml-[3px]">
          <path d="M2 1 V30 H36" stroke="#fff" strokeWidth="3" strokeLinecap="round" />
          <rect x="8" y="17" width="5" height="9" rx="2" fill="#fff" />
          <rect x="16" y="9" width="5" height="17" rx="2" fill="#fff" />
          <rect x="23" y="14" width="5" height="12" rx="2" fill="#fff" />
          <rect x="30" y="4" width="5" height="22" rx="2" fill="#fff" />
        </svg>
        <svg width="36" height="36" viewBox="0 0 36 36" className="mt-[22px] -ml-[3px]">
          <circle cx="18" cy="18" r="17.5" fill="#fff" />
          <g fill="none" stroke="#333" strokeWidth="2">
            <ellipse cx="18" cy="18" rx="8" ry="17.5" />
            <path d="M1 12 H35 M1 24 H35" />
          </g>
        </svg>
        <svg width="36" height="30" viewBox="0 0 36 30" className="mt-[22px] -ml-[3px]" fill="#fff">
          <path d="M5 12 L18 19 L31 12 V26 L18 30 L5 26Z" />
          <path d="M0 6 L11 1 L18 6 L25 1 L36 6 L30 12 L18 17 L6 12Z M8 7 L18 12 L28 7 L18 9Z" fillRule="evenodd" />
        </svg>
        <FaUserFriends size={40} color="#fff" className="mt-[21px] mb-[14px] -ml-[3px]" />
      </div>
      <div className="w-[231px] ml-[57px] shrink-0 pt-[40px]">
        <Card value="₹ 1,431" label="REVENUE PER CUSTOMER" />
        <div className="mt-[19px]"><Card value="17.4K" label="UNIQUE CUSTOMERS" /></div>
        <div className="mt-[46px] h-[20px] text-[16px] leading-[20px] font-bold text-[#252423] text-center pl-[44px] whitespace-nowrap tracking-[-0.015em]">Orders by Income level</div>
        <Donut1 />
        <div className="h-[20px] text-[16px] leading-[20px] font-bold text-[#252423] text-center pl-[44px] whitespace-nowrap tracking-[-0.015em]">Orders by Occupation</div>
        <Donut2 />
      </div>
      <div className="ml-[31px] w-[940px] shrink-0 flex flex-col">
        <div className="mt-[27px] ml-[10px] flex gap-[2px] text-[13.5px] font-bold">
          <div className="w-[170px] h-[36px] bg-[#b0b0b0] border-2 border-[#8f8f8f] text-[#5c5c5c] flex items-center justify-center">Total customers</div>
          <div className="w-[172px] h-[36px] bg-[#333] border-2 border-[#666] text-white flex items-center justify-center">Revenue per customers</div>
        </div>
        <LineChart />
        <div className="ml-[59px] mt-[5px] w-[853px] flex items-center">
          <div className="w-[16px] h-[16px] rounded-full border-2 border-[#444] bg-white" />
          <div className="flex-1 h-[5px] bg-[#444]" />
          <div className="w-[16px] h-[16px] rounded-full border-2 border-[#444] bg-white" />
        </div>
        <div className="h-[16px] mt-[1px] text-[11.2px] leading-[16px] text-[#444] text-center ml-[31px] mr-[4px]">Start of Week</div>
        <div className="flex">
          <Table />
          <div className="ml-[14px] mt-[40px] w-[7px] h-[33px] rounded-full bg-[#b3b3b3] shrink-0" />
          <div className="ml-[19px]"><RightPanel /></div>
        </div>
      </div>
    </div>
  </div>
);

const Filters = () => (
  <div className="w-[41px] shrink-0 bg-[#fbfbfb] flex flex-col items-center">
    <ChevronsLeft size={24} strokeWidth={1.3} color="#252423" className="mt-[12px]" />
    <svg width="16" height="17" viewBox="0 0 16 17" fill="none" stroke="#333" strokeWidth="1.2" className="mt-[15px] ml-[6px]">
      <path d="M14.5 1 V16 L10 11 L1.5 8.5Z" />
    </svg>
    <div className="mt-[9px] ml-[3px] [writing-mode:vertical-rl] text-[18px] leading-[22px] font-semibold text-[#252423] tracking-[0.01em]">Filters</div>
  </div>
);

const Tabs = () => (
  <div className="h-[44px] shrink-0 bg-[#f3f2f1] flex text-[15px] text-[#252423]">
    <div className="w-[209px] border-r border-[#c8c6c4] flex relative">
      <svg width="24" height="22" viewBox="0 0 24 22" fill="none" stroke="#252423" strokeWidth="1.5" className="ml-[65px] mt-[9px]">
        <rect x="1" y="1" width="22" height="15" /><path d="M12 16 V20 M7 20 H17" />
      </svg>
      <div className="absolute left-[63px] top-[35px] w-[30px] h-[4px] rounded-[2px] bg-[#117865]" />
      <svg width="16" height="26" viewBox="0 0 16 26" fill="none" stroke="#555" strokeWidth="1.3" className="ml-[35px] mt-[5px]">
        <rect x="1" y="1" width="14" height="24" rx="1.5" /><circle cx="8" cy="21" r="0.8" fill="#555" />
      </svg>
      <div className="ml-[27px] mt-[16px] w-0 h-0 border-y-[6px] border-y-transparent border-r-[5px] border-r-[#c8c6c4]" />
      <div className="ml-[24px] mt-[16px] w-0 h-0 border-y-[6px] border-y-transparent border-l-[5px] border-l-[#c8c6c4]" />
    </div>
    <div className="w-[156px] border-r border-[#d4d2d0] flex items-center justify-center">Exec dashboard</div>
    <div className="w-[115px] border-r border-[#d4d2d0] flex items-center justify-center">Map view</div>
    <div className="w-[149px] flex items-center justify-center">Product details</div>
    <div className="w-[166px] bg-white border-b-[5px] border-[#117865] flex items-center justify-center relative font-medium text-[15.5px] pt-[2px]">
      Customer details
      <span className="absolute right-[6px] top-[2px] text-[12px] font-bold leading-[16px]">x</span>
    </div>
    <div className="w-[160px] border-r border-[#d4d2d0] flex items-center justify-center">
      <svg width="16" height="16" viewBox="0 0 16 16" fill="none" stroke="#555" strokeWidth="1" className="mr-[4px] mt-[4px]">
        <path d="M1 5 C5 1 11 2 15 7 M3 3 L13 15 M4 8 C6 6 9 6 10 9 C11 12 9 13 7 12" />
      </svg>
      Category Tooltip
    </div>
    <div className="w-[189px] border-r border-[#c8c6c4] flex items-center justify-center">Decomposition Trees</div>
    <div className="w-[49px] h-[40px] mt-[2px] bg-[#117865] flex items-center justify-center">
      <Plus size={19} strokeWidth={3.4} color="#fff" />
    </div>
  </div>
);

const FormatPane = () => (
  <div className="w-[226px] shrink-0 bg-[#f3f2f1] border-x border-[#e1dfdd]">
    <PaneHead t="Format" ml="pl-[10px]" />
    <div className="mx-[10px] h-[33px] bg-white border border-[#8a8886] rounded-[2px] flex items-center pl-[9px] text-[17px] text-[#605e5c]">
      <Mag size={18} />
      <span className="ml-[7px]">Search</span>
    </div>
    <div className="mt-[15px]">
      {["Page information", "Canvas settings", "Canvas background", "Wallpaper", "Filter pane", "Filter cards"].map((t) => (
        <div key={t} className="h-[51px] border-b-2 border-[#e9e7e6] flex items-center pl-[10px] text-[15.2px] text-[#252423]">
          <ChevronRight size={22} strokeWidth={1.2} className="-ml-[3px]" />
          <span className="ml-[1px]">{t}</span>
        </div>
      ))}
    </div>
  </div>
);

const TableIc = () => (
  <svg width="17" height="17" viewBox="0 0 17 17" fill="none" stroke="#444" strokeWidth="1.1" className="shrink-0">
    <rect x="1" y="2" width="15" height="13" /><path d="M1 5 H16" strokeWidth="1.8" /><path d="M1 8.5 H16 M1 12 H16 M6 2 V15 M11 2 V15" />
  </svg>
);
const CalcIc = () => (
  <svg width="19" height="20" viewBox="0 0 19 20" fill="none" stroke="#555" strokeWidth="1" className="shrink-0 -ml-[1px]">
    <rect x="0.5" y="1" width="12" height="11" /><path d="M0.5 3.5 H12.5 M0.5 7 H12.5 M5 1 V12" />
    <rect x="9" y="6.5" width="9.5" height="13" fill="#f3f2f1" /><rect x="10.5" y="8" width="6.5" height="3" /><path d="M11 13.5 H17 M11 15.5 H17 M11 17.5 H17" strokeDasharray="1 1" />
  </svg>
);
const MeasIc = () => (
  <svg width="17" height="19" viewBox="0 0 17 19" fill="none" stroke="#555" strokeWidth="1" className="shrink-0">
    <rect x="1" y="1" width="14" height="17" /><rect x="3" y="3" width="10" height="14" /><rect x="5" y="5" width="6" height="3" /><path d="M5 11 H12 M5 13 H12 M5 15 H12" strokeDasharray="1 1" />
  </svg>
);

const dataItems: [string, number][] = [["Measure Table", 2], ["Adjusted Profit (%)", 1], ["Calendar Lookup", 0], ["Customer Lookup", 0], ["Customer Metric Select...", 1], ["Metric Selection", 1], ["Product Categories Loo...", 0], ["Product Lookup", 0], ["Product Subcategories ...", 0], ["Returns Data", 0], ["Rolling calender", 0], ["Sales Data", 0], ["Territory Lookup", 0]];

const DataPane = () => (
  <div className="w-[227px] shrink-0 bg-[#f3f2f1] border-r border-[#e1dfdd]">
    <PaneHead t="Data" ml="pl-[11px]" />
    <div className="mt-[5px] ml-[6px] w-[215px] h-[33px] bg-white border border-[#8a8886] rounded-[2px] flex items-center pl-[9px] text-[17px] text-[#605e5c]">
      <Mag size={18} />
      <span className="ml-[7px]">Search</span>
    </div>
    <div className="mt-[11px] pl-[8px]">
      {dataItems.map(([t, k]) => (
        <div key={t} className="h-[30px] flex items-center text-[14.4px] text-[#605e5c] whitespace-nowrap">
          <ChevronRight size={20} strokeWidth={1} color="#666" className="shrink-0 mr-[2px]" />
          <span className="w-[17px] flex justify-center">{k === 0 ? <TableIc /> : k === 1 ? <CalcIc /> : <MeasIc />}</span>
          <span className="ml-[6px]">{t}</span>
        </div>
      ))}
    </div>
  </div>
);

const RightRail = () => (
  <div className="w-[40px] shrink-0 bg-[#f3f2f1] flex flex-col items-center">
    <div className="w-full h-[40px] bg-[#e1dfdd] border border-[#8a8886] flex items-center justify-center">
      <svg width="18" height="24" viewBox="0 0 18 24" fill="none" stroke="#333" strokeWidth="1.3">
        <ellipse cx="9" cy="4" rx="8" ry="3" /><path d="M1 4 V20 C1 23 17 23 17 20 V4" />
      </svg>
    </div>
    <div className="w-full h-[39px] mt-[1px] bg-[#e1dfdd] border border-[#8a8886] flex items-center justify-center">
      <svg width="24" height="24" viewBox="0 0 24 24" fill="none" stroke="#333" strokeWidth="1.2">
        <path d="M2 21 V10 H8 V3 H13 V12 M8 10 V21 M2 21 H8" />
        <path d="M9 21 C11 22 14 21 15 17 L22 7 L20 5 L12 14 C11 17 10 19 9 21Z" fill="#5aa8e6" stroke="#1f7fc9" />
      </svg>
    </div>
    <Plus size={32} strokeWidth={1.1} color="#252423" className="mt-[4px]" />
    <div className="mt-auto w-full h-[40px] border-t border-[#d4d2d0] flex items-center justify-center">
      <Settings size={26} strokeWidth={1.2} color="#333" />
    </div>
  </div>
);

const StatusBar = () => (
  <div className="h-[30px] shrink-0 bg-[#f3f2f1] border-t-2 border-[#e1dfdd] border-b-[1px] border-b-black flex items-center text-[15.5px] text-[#605e5c] whitespace-nowrap">
    <span className="ml-[6px]">Page 4 of 6</span>
    <span className="ml-auto w-[4px] h-[2px] bg-[#605e5c]" />
    <div className="ml-[7px] w-[125px] flex items-center relative">
      <div className="w-full h-[1px] bg-[#605e5c]" />
      <div className="absolute left-[49px] -top-[6px] w-[5px] h-[13px] bg-[#605e5c]" />
      <div className="absolute left-[61px] -top-[3px] w-[1px] h-[7px] bg-[#605e5c]" />
    </div>
    <Plus size={11} strokeWidth={2} color="#605e5c" className="ml-[6px]" />
    <span className="ml-[21px] w-[29px] text-[14.5px]">82%</span>
    <div className="ml-[18px] w-[19px] h-[17px] border-2 border-[#8a8886] bg-white p-[2px]">
      <div className="w-full h-full border border-dashed border-[#666]" />
    </div>
    <span className="ml-[18px] mr-[6px] w-[240px] text-[15.3px] tracking-[-0.02em]">Update available (click to download)</span>
  </div>
);

const Win = () => (
  <svg width="30" height="30" viewBox="0 0 30 30" className="block">
    <defs><linearGradient id="wg" x1="0" y1="0" x2="1" y2="1"><stop offset="0" stopColor="#38c3f5" /><stop offset="1" stopColor="#0a78d4" /></linearGradient></defs>
    <rect x="0" y="0" width="14.3" height="14.3" rx="1" fill="url(#wg)" />
    <rect x="15.7" y="0" width="14.3" height="14.3" rx="1" fill="url(#wg)" />
    <rect x="0" y="15.7" width="14.3" height="14.3" rx="1" fill="url(#wg)" />
    <rect x="15.7" y="15.7" width="14.3" height="14.3" rx="1" fill="url(#wg)" />
  </svg>
);

const tb: React.ReactNode[] = [
  <svg key="a" width="30" height="30" viewBox="0 0 30 30"><rect x="10" y="2" width="18" height="20" rx="1.5" fill="#f2f2f2" /><rect x="5" y="10" width="18" height="18" rx="1.5" fill="#2a2a2a" /><rect x="10" y="10" width="13" height="12" fill="#bdbdbd" /></svg>,
  <svg key="b" width="32" height="30" viewBox="0 0 32 30"><path d="M2 1 H13 L15 4 H28 V29 H2Z" fill="#e3a51c" /><rect x="2" y="5" width="28" height="24" rx="1" fill="#ffd75e" /><rect x="11" y="19" width="11" height="7" rx="1" fill="#0a78d4" /></svg>,
  <svg key="c" width="30" height="30" viewBox="0 0 30 30"><path d="M8 3 C13 1 14 5 13 9 L9 24 C6 28 2 25 3 19 C4 13 5 6 8 3Z" fill="#2f9be8" /><path d="M13 3 C18 1 21 3 22 7 L26 20 C27 25 22 27 19 24 L12 8Z" fill="#d86ec5" /><path d="M7 22 C11 15 18 13 26 16 C27 24 20 28 12 27 C9 27 7 25 7 22Z" fill="#f6b23c" /><path d="M11 11 C15 9 19 10 22 13 L18 18 L10 17Z" fill="#e9f3ff" /></svg>,
  <svg key="d" width="30" height="30" viewBox="0 0 30 30"><defs><linearGradient id="eg" x1="0" y1="0" x2="1" y2="1"><stop offset="0" stopColor="#2fcf8f" /><stop offset="1" stopColor="#0b5fb5" /></linearGradient></defs><circle cx="15" cy="15" r="14" fill="url(#eg)" /><path d="M28 17 C26 10 17 7 11 12 C7 16 9 24 16 24 C20 24 24 23 26 21" fill="none" stroke="#0f4f9f" strokeWidth="4" /><ellipse cx="18" cy="15" rx="6" ry="3.5" fill="#e7f6f3" /></svg>,
  <svg key="e" width="30" height="30" viewBox="0 0 30 30"><circle cx="15" cy="15" r="14" fill="#ea4335" /><path d="M15 15 L2.5 9 A14 14 0 0 0 12 28.7Z" fill="#34a853" /><path d="M15 15 L12 28.7 A14 14 0 0 0 29 15 Z" fill="#fbbc05" /><circle cx="15" cy="15" r="6.5" fill="#4285f4" stroke="#fff" strokeWidth="2.4" /></svg>,
  <svg key="f" width="30" height="30" viewBox="0 0 30 30"><rect x="1" y="5" width="28" height="20" rx="5" fill="#f00" /><path d="M12 10 L20 15 L12 20Z" fill="#fff" /></svg>,
  <svg key="g" width="30" height="30" viewBox="0 0 30 30"><path d="M9 7 L18 1 L28 7 V24 L18 28 L9 24Z" fill="#1490df" /><path d="M18 1 L28 7 L18 13 L9 7Z" fill="#28a8ea" /><rect x="1" y="9" width="16" height="15" rx="2" fill="#0f5cab" /><ellipse cx="9" cy="16.5" rx="4" ry="5" fill="none" stroke="#fff" strokeWidth="2" /></svg>,
  <svg key="h" width="30" height="30" viewBox="0 0 30 30"><path d="M2 28 L4 21 C1 13 7 2 16 2 C24 2 28 9 28 15 C28 24 18 30 9 26Z" fill="none" stroke="#1f8a5a" strokeWidth="3" /><path d="M10 9 C8 14 15 22 21 21 L22 17 L18 16 L16 18 C14 17 13 15 12 13 L14 11 L12 8Z" fill="#1f8a5a" /></svg>,
  <svg key="i" width="30" height="30" viewBox="0 0 30 30" fill="none"><path d="M6 12 C8 6 22 6 24 12" stroke="#e8741e" strokeWidth="2.6" /><path d="M6 16 C8 25 22 25 24 16" stroke="#e8741e" strokeWidth="3" /><circle cx="10" cy="4" r="1" fill="#777" /><circle cx="22" cy="4" r="1" fill="#777" /><circle cx="12" cy="27" r="1.2" fill="#777" /></svg>,
  <svg key="j" width="30" height="30" viewBox="0 0 30 30"><circle cx="15" cy="15" r="14.5" fill="#1ed760" /><g fill="none" stroke="#111" strokeLinecap="round"><path d="M7 10 C13 8 19 9 24 12" strokeWidth="3" /><path d="M8 15.5 C13 14 18 15 22 17" strokeWidth="2.6" /><path d="M9 21 C13 20 17 20 20 22" strokeWidth="2.2" /></g></svg>,
];

const Taskbar = () => (
  <div className="flex-1 bg-linear-to-r from-[#c8ecef] via-[#dbe9e8] to-[#c9eaec] flex items-center relative text-[14.5px] whitespace-nowrap">
    <svg width="34" height="36" viewBox="0 0 34 36" className="ml-[25px] shrink-0">
      <path d="M3 24 C0 16 8 10 14 13 C18 9 25 12 25 19 C29 20 28 27 24 27 H8 C5 27 3 26 3 24Z" fill="#a9c8ee" />
      <path d="M21 22 C24 26 26 29 25 32 C24 36 19 35 19 31 C19 28 20 25 21 22Z" fill="#1a5fe0" />
    </svg>
    <div className="absolute left-[37px] top-[6px] w-[21px] h-[21px] rounded-full bg-[#c42b1c] text-white text-[13px] leading-[21px] text-center">1</div>
    <div className="ml-[5px] w-[439px] flex flex-col text-[#252423] leading-[20px]">
      <span>26°C</span>
      <span className="text-[#555]">Light rain</span>
    </div>
    <Win />
    <div className="ml-[17px] w-[270px] h-[39px] rounded-full bg-[#f3f9f9] border border-[#d5dfdf] flex items-center pl-[13px] text-[16px] text-[#555]">
      <svg width="22" height="22" viewBox="0 0 22 22" fill="none" stroke="#222" strokeWidth="2"><circle cx="9.5" cy="9.5" r="7" /><path d="M14.5 14.5 L20 20" /></svg>
      <span className="ml-[8px]">Search</span>
      <svg width="68" height="36" viewBox="0 0 68 36" className="ml-auto mr-[1px]">
        <path d="M2 27 C18 31 40 29 66 22 L66 27 C42 33 20 35 2 30Z" fill="#5c8a3c" />
        <ellipse cx="36" cy="17" rx="11" ry="7" fill="#b8622a" />
        <circle cx="24" cy="14" r="5" fill="#b8622a" />
        <path d="M46 20 C58 18 60 6 54 1 C48 -1 43 8 47 14Z" fill="#c9702f" />
        <circle cx="8" cy="30" r="3" fill="#d9b25a" /><circle cx="20" cy="33" r="3" fill="#d9b25a" /><circle cx="62" cy="15" r="3" fill="#d9b25a" />
      </svg>
    </div>
    <div className="ml-[6px] flex items-center">
      {tb.map((n, i) => (
        <div key={i} className="w-[55px] h-[60px] flex items-center justify-center relative">
          {n}
          {(i === 1 || i === 3 || i === 9) && <span className="absolute bottom-[2px] w-[5px] h-[5px] rounded-full bg-[#777]" />}
        </div>
      ))}
      <div className="ml-[5px] w-[48px] h-[48px] rounded-[6px] bg-[#e6f5f5] shadow-[0_1px_2px_rgba(0,0,0,0.15)] flex items-center justify-center relative">
        <svg width="30" height="31" viewBox="0 0 30 31"><rect x="19" y="0" width="10" height="30" rx="1" fill="#c79500" /><rect x="11" y="10" width="10" height="20" rx="1" fill="#edc73a" /><rect x="3" y="17" width="10" height="13" rx="1" fill="#f6e27a" /></svg>
        <span className="absolute bottom-[1px] w-[20px] h-[4px] rounded-full bg-[#2b8a9e]" />
      </div>
    </div>
    <ChevronUp size={20} strokeWidth={1.8} color="#222" className="ml-[164px] shrink-0" />
    <div className="ml-[24px] w-[30px] flex flex-col items-center leading-[21px] text-[#252423]"><span>ENG</span><span>IN</span></div>
    <svg width="22" height="20" viewBox="0 0 22 20" fill="none" stroke="#222" strokeWidth="1.4" className="ml-[20px] shrink-0"><path d="M1 7 C6 1 16 1 21 7 M4 10 C8 6 14 6 18 10 M7 13 C9 11 13 11 15 13" /><circle cx="11" cy="17" r="1.4" fill="#222" /></svg>
    <svg width="24" height="22" viewBox="0 0 24 22" fill="none" stroke="#444" strokeWidth="1.1" className="ml-[4px] shrink-0"><path d="M2 8 H6 L12 3 V19 L6 14 H2Z" fill="#ccc" /><path d="M15 7 C17 10 17 12 15 15 M18 5 C21 9 21 13 18 17" stroke="#999" /></svg>
    <svg width="24" height="16" viewBox="0 0 24 16" className="ml-[8px] shrink-0"><rect x="1" y="1" width="19" height="14" rx="3" fill="none" stroke="#222" strokeWidth="1.5" /><rect x="4" y="4" width="11" height="8" fill="#222" /><rect x="21" y="5" width="2" height="6" fill="#222" /></svg>
    <div className="ml-[17px] w-[80px] flex flex-col items-end leading-[21px] text-[#252423]"><span>02:36 PM</span><span>15-10-2024</span></div>
    <svg width="22" height="26" viewBox="0 0 22 26" fill="none" stroke="#333" strokeWidth="1.2" className="ml-[10px] shrink-0"><path d="M3 20 C5 17 5 15 5 12 C5 9 7 6 11 6 M3 20 H15 C13 17 13 15 13 10 M7 20 C7 24 11 24 11 20" /><path d="M14 2 H20 L14 8 H20" /></svg>
  </div>
);

export default function App() {
  return (
    <div className="w-[1920px] h-[1080px] overflow-hidden flex flex-col relative bg-white text-[#252423] font-['Open_Sans','Noto_Sans',sans-serif] tracking-[-0.03em]">
      <TitleBar />
      <Ribbon />
      <div className="h-[790px] shrink-0 flex">
        <div className="w-[1427px] shrink-0 flex flex-col">
          <div className="h-[746px] flex">
            <Rail />
            <Page />
            <Filters />
          </div>
          <Tabs />
        </div>
        <FormatPane />
        <DataPane />
        <RightRail />
      </div>
      <StatusBar />
      <Taskbar />
    </div>
  );
}
